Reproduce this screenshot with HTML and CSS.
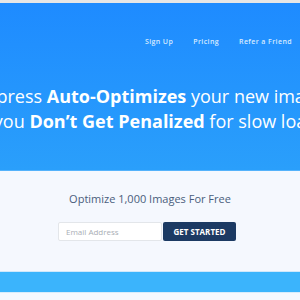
FILE: index.html
```html
<!DOCTYPE html>
<html>
<head>
<meta charset="utf-8">
<link rel="stylesheet" href="styles.css">
</head>
<body>
<div class="topstrip"></div>
<header class="hero">
  <nav class="nav">
    <a class="nav-link" href="#">Sign Up</a>
    <a class="nav-link" href="#">Pricing</a>
    <a class="nav-link" href="#">Refer a Friend</a>
  </nav>
  <div class="headline">
    <p class="line line-one">Wordpress <b>Auto-Optimizes</b> your new images so</p>
    <p class="line line-two">that you <b>Don’t Get Penalized</b> for slow loading pages</p>
  </div>
</header>
<section class="signup">
  <h2 class="offer">Optimize 1,000 Images For Free</h2>
  <form class="form">
    <input class="email" type="text" placeholder="Email Address">
    <button class="cta" type="button">GET STARTED</button>
  </form>
</section>
<div class="bar"></div>
<div class="after"></div>
</body>
</html>
```
FILE: styles.css
```css
html, body {
  margin: 0;
  padding: 0;
  overflow: hidden;
  background: #f5f8fe;
  font-family: "Open Sans", "Noto Sans", sans-serif;
}
.topstrip {
  height: 3px;
  background: #e6e6e6;
}
.hero {
  height: 167px;
  background: linear-gradient(180deg, #1e8bff 0%, #2a9ffb 100%);
  border-bottom: 1px solid #54b2fb;
  display: flex;
  flex-direction: column;
}
.nav {
  display: flex;
  justify-content: flex-end;
  gap: 20px;
  padding: 32px 8px 0 0;
  height: 14px;
}
.nav-link {
  color: #d6eaff;
  text-decoration: none;
  font-size: 7px;
  font-weight: 600;
  letter-spacing: 0.4px;
  line-height: 14px;
}
.headline {
  margin-top: 35px;
  display: flex;
  flex-direction: column;
  align-items: center;
}
.line {
  margin: 0;
  white-space: nowrap;
  color: #ffffff;
  font-size: 18px;
  line-height: 25px;
  font-weight: 400;
}
.line b {
  font-weight: 700;
}
.line-one {
  margin-left: 8px;
}
.line-two {
  margin-left: 52px;
}
.signup {
  height: 100px;
  display: flex;
  flex-direction: column;
  align-items: center;
}
.offer {
  margin: 19px 0 0;
  font-size: 11px;
  line-height: 18px;
  font-weight: 400;
  color: #4a5d7c;
}
.form {
  margin-top: 14px;
  display: flex;
  gap: 1px;
  padding-right: 6px;
}
.email {
  box-sizing: border-box;
  width: 104px;
  height: 19px;
  border: 1px solid #e3e6ea;
  border-radius: 2px;
  background: #fff;
  padding: 0 7px;
  font-family: inherit;
  font-size: 8px;
  color: #333;
  outline: none;
}
.email::placeholder {
  color: #a9aeb5;
}
.cta {
  box-sizing: border-box;
  width: 73px;
  height: 19px;
  border: 0;
  border-radius: 2px;
  background: #1c3a63;
  color: #fff;
  font-family: inherit;
  font-size: 8px;
  font-weight: 700;
  padding: 0;
}
.bar {
  height: 20px;
  background: #3bb4fc;
  border-top: 1px solid #cfe8fb;
}
.after {
  height: 20px;
  border-top: 1px solid #d8ecfb;
}
```
